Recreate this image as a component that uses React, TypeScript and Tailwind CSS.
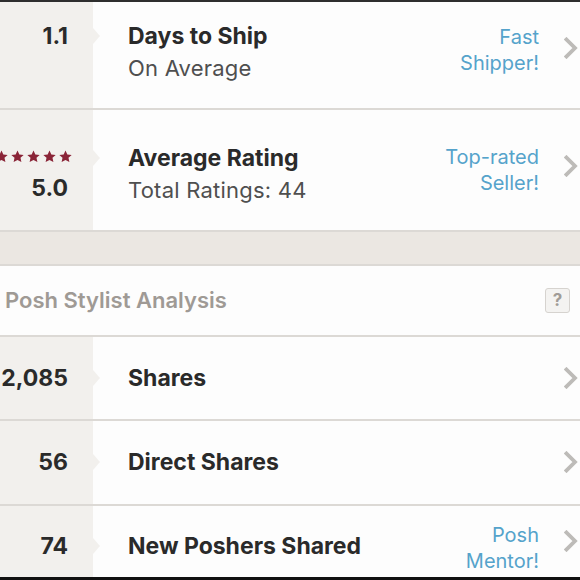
import type { ReactNode } from 'react';

const FONT = { fontFamily: 'Inter, "Open Sans", Arial, sans-serif' };

function Chevron() {
  return (
    <svg width="14" height="22" viewBox="0 0 14 22" fill="none">
      <polyline points="2.5,2.5 11,11 2.5,19.5" stroke="#bdbbb8" strokeWidth="3.8" strokeLinecap="square" />
    </svg>
  );
}

function Star() {
  return (
    <svg width="13" height="13" viewBox="0 0 24 24" className="shrink-0">
      <path d="M12 0.8l3.4 7.3 8 .9-5.9 5.4 1.7 7.9L12 18.3l-7.2 4 1.7-7.9L.6 9l8-.9z" fill="#8a2437" />
    </svg>
  );
}

function Notch({ top }: { top: number }) {
  return (
    <div
      className="absolute left-[93px] w-0 h-0 border-y-[8px] border-y-transparent border-l-[7px] border-l-[#f2f0ed]"
      style={{ top }}
    />
  );
}

function Line() {
  return <div className="h-[2px] bg-[#dcd9d5]" />;
}

type RowProps = {
  height: number;
  left: ReactNode;
  leftTop: number;
  notchTop: number;
  title: string;
  subtitle?: string;
  textTop: number;
  badge?: string[];
  badgeTop?: number;
  chevronTop: number;
};

function StatRow({ height, left, leftTop, notchTop, title, subtitle, textTop, badge, badgeTop, chevronTop }: RowProps) {
  return (
    <div className="relative flex bg-[#fdfdfd]" style={{ height }}>
      <div className="w-[93px] shrink-0 bg-[#f2f0ed] overflow-hidden" style={{ paddingTop: leftTop }}>
        {left}
      </div>
      <Notch top={notchTop} />
      <div className="flex-1 pl-[35px]" style={{ paddingTop: textTop }}>
        <div className="text-[23px] leading-[32px] font-bold text-[#2a2a2a]">{title}</div>
        {subtitle && <div className="text-[22px] leading-[32px] text-[#4f4f4f] tracking-[0.01em]">{subtitle}</div>}
      </div>
      {badge && (
        <div className="text-right text-[20px] leading-[26px] text-[#55a3cb]" style={{ paddingTop: badgeTop }}>
          {badge.map((b) => (
            <div key={b}>{b}</div>
          ))}
        </div>
      )}
      <div className="w-[14px] ml-[25px] mr-[2px] shrink-0" style={{ paddingTop: chevronTop }}>
        <Chevron />
      </div>
    </div>
  );
}

function Num({ children }: { children: ReactNode }) {
  return (
    <div className="text-right pr-[25px] text-[23px] leading-[32px] font-bold text-[#2a2a2a] whitespace-nowrap">
      {children}
    </div>
  );
}

export default function App() {
  return (
    <div className="w-[580px] h-[580px] overflow-hidden bg-[#fdfdfd] flex flex-col" style={FONT}>
      <div className="h-[2px] bg-[#2e2e2e]" />
      <StatRow
        height={106}
        left={<Num>1.1</Num>}
        leftTop={18}
        notchTop={26}
        title="Days to Ship"
        subtitle="On Average"
        textTop={18}
        badge={['Fast', 'Shipper!']}
        badgeTop={22}
        chevronTop={35}
      />
      <Line />
      <StatRow
        height={120}
        left={
          <div>
            <div className="flex justify-end gap-[3px] pr-[21px] h-[32px] items-center">
              <Star />
              <Star />
              <Star />
              <Star />
              <Star />
            </div>
            <Num>5.0</Num>
          </div>
        }
        leftTop={30}
        notchTop={40}
        title="Average Rating"
        subtitle="Total Ratings: 44"
        textTop={32}
        badge={['Top-rated', 'Seller!']}
        badgeTop={34}
        chevronTop={45}
      />
      <Line />
      <div className="h-[32px] bg-[#ebe7e2]" />
      <Line />
      <div className="h-[69px] flex items-center justify-between pl-[5px] pr-[10px] bg-[#fdfdfd]">
        <span className="text-[22px] font-semibold text-[#9f9a95]">Posh Stylist Analysis</span>
        <span className="w-[25px] h-[25px] flex items-center justify-center rounded-[3px] border border-[#d6d3cf] bg-[#f4f3f1] text-[17px] font-bold text-[#a19c97]">
          ?
        </span>
      </div>
      <Line />
      <StatRow
        height={82}
        left={<Num>2,085</Num>}
        leftTop={25}
        notchTop={33}
        title="Shares"
        textTop={25}
        chevronTop={30}
      />
      <Line />
      <StatRow
        height={83}
        left={<Num>56</Num>}
        leftTop={25}
        notchTop={33}
        title="Direct Shares"
        textTop={25}
        chevronTop={30}
      />
      <Line />
      <StatRow
        height={71}
        left={<Num>74</Num>}
        leftTop={24}
        notchTop={32}
        title="New Poshers Shared"
        textTop={24}
        badge={['Posh', 'Mentor!']}
        badgeTop={16}
        chevronTop={24}
      />
      <div className="h-[3px] bg-[#111]" />
    </div>
  );
}
